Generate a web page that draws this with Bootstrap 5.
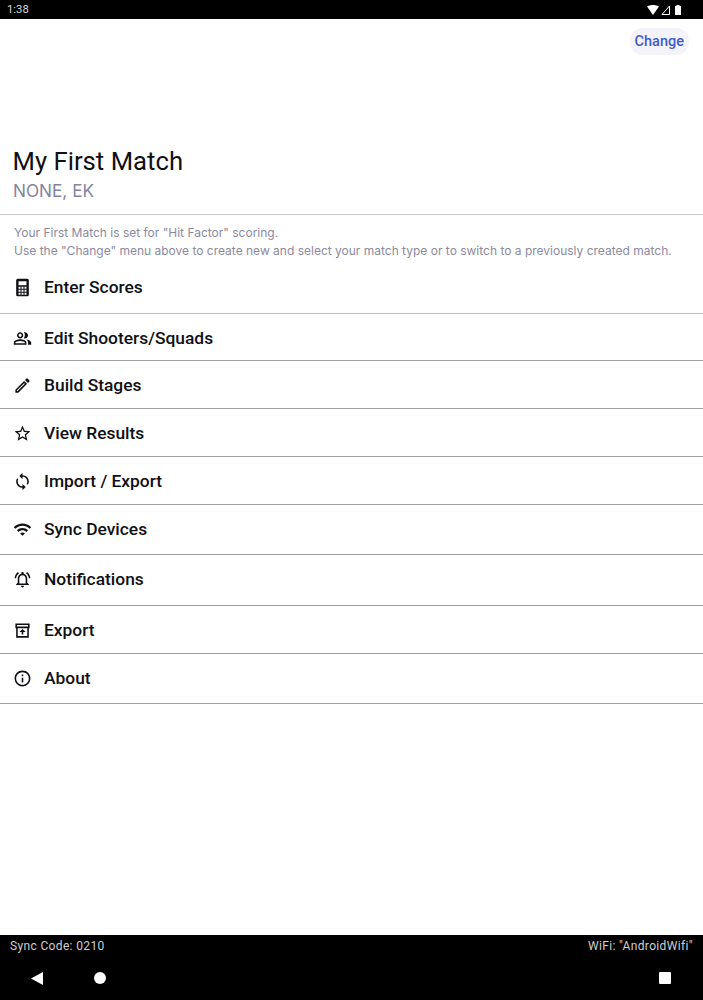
<!DOCTYPE html>
<html lang="en">
<head>
    <meta charset="UTF-8">
    <meta name="viewport" content="width=device-width, initial-scale=1.0">
    <title>My First Match</title>
    <link href="https://cdn.jsdelivr.net/npm/bootstrap@5.3.0/dist/css/bootstrap.min.css" rel="stylesheet">
    <style>
        html, body {
            height: 1000px;
            overflow: hidden;
        }
        body {
            font-family: Roboto, "Liberation Sans", sans-serif;
            background-color: #fff;
            color: #101014;
        }
        .app-page {
            height: 1000px;
        }
        .status-bar {
            height: 19px;
            padding: 0 22px 0 7px;
            background-color: #000;
            color: #d8d8d8;
            font-size: 11.300px;
            line-height: 19px;
        }
        .status-icons {
            gap: 2px;
        }
        .status-battery {
            margin-left: 3px;
        }
        .top-action {
            height: 195px;
            padding: 9px 14px 0 0;
        }
        .btn-change {
            height: 27px;
            padding: 0 5px;
            border: 0;
            border-radius: 13px;
            background-color: #f3f3f9;
            color: #3f5cc8;
            font-size: 14.500px;
            font-weight: 500;
            line-height: 27px;
        }
        .match-head {
            height: 0;
        }
        .match-title {
            margin: 0;
            padding: 126px 0 0 12.500px;
            font-size: 25.700px;
            font-weight: 400;
            line-height: 32px;
        }
        .match-sub {
            padding-left: 13px;
            color: #85849f;
            font-family: Inter, sans-serif;
            font-size: 17.200px;
            line-height: 28px;
        }
        .match-info {
            height: 58px;
            padding: 9px 14px 0;
            border-top: 1px solid #c9c9c9;
            color: #8b8a9e;
            font-family: Inter, sans-serif;
            font-size: 12px;
            line-height: 18px;
            white-space: nowrap;
        }
        .menu-item {
            padding: 0 0 0 12.500px;
            border-color: #a0a0a0;
            color: #101014;
            font-size: 17.400px;
            font-weight: 500;
        }
        .list-group-flush > .menu-item:last-child {
            border-bottom-width: 1px;
        }
        .menu-item svg {
            flex: none;
            width: 19px;
            height: 19px;
            margin-right: 12.500px;
            fill: currentColor;
        }
        .row-h41 { height: 42px; padding-bottom: 11px; border-bottom-color: #bcbcbc; }
        .row-h47 { height: 47px; padding-top: 3px; }
        .row-h48 { height: 48px; padding-top: 2px; }
        .row-h50 { height: 50px; }
        .row-h51 { height: 51px; padding-bottom: 1px; }
        .bottom-bar {
            background-color: #000;
            color: #cfcfcf;
        }
        .sync-line {
            height: 20px;
            padding: 1px 10px 0;
            font-size: 12px;
            letter-spacing: .35px;
            line-height: 20px;
        }
        .nav-line {
            height: 45px;
        }
        .nav-line svg {
            position: absolute;
            top: 17px;
            fill: #fff;
        }
        .nav-back { left: 31px; }
        .nav-home { left: 94px; }
        .nav-recent { left: 659px; }
    </style>
</head>
<body>

<div class="app-page d-flex flex-column">
    <!-- Status bar -->
    <div class="status-bar d-flex justify-content-between align-items-center">
        <span>1:38</span>
        <span class="status-icons d-flex align-items-center">
            <svg width="12" height="10" viewBox="0 0 12 10"><path fill="#fff" d="M0 1.500C3.500-.5 8.500-.5 12 1.500L6 10z"/></svg>
            <svg width="9" height="10" viewBox="0 0 9 10"><path fill="none" stroke="#fff" d="M8.500 1v8.500H1z"/></svg>
            <svg class="status-battery" width="6" height="10" viewBox="0 0 6 10"><path fill="#fff" d="M1.500 0h3v1H6v9H0V1h1.500z"/></svg>
        </span>
    </div>

    <div class="flex-grow-1">
        <div class="match-head">
            <h1 class="match-title">My First Match</h1>
            <div class="match-sub">NONE, EK</div>
        </div>
        <div class="top-action d-flex justify-content-end align-items-start">
            <button class="btn btn-change" type="button">Change</button>
        </div>

        <div class="match-info">
            <div>Your First Match is set for "Hit Factor" scoring.</div>
            <div>Use the "Change" menu above to create new and select your match type or to switch to a previously created match.</div>
        </div>

        <!-- Main menu -->
        <div class="list-group list-group-flush">
            <a href="#" class="list-group-item menu-item row-h41 d-flex align-items-center">
                <svg viewBox="0 0 24 24"><path fill-rule="evenodd" d="M6 1h12a2 2 0 0 1 2 2v18a2 2 0 0 1-2 2H6a2 2 0 0 1-2-2V3a2 2 0 0 1 2-2zm1 3v5h10V4H7zm0 7v2.500h2.500V11H7zm3.750 0v2.500h2.500V11h-2.500zM14.500 11v2.500H17V11h-2.500zM7 14.750v2.500h2.500v-2.500H7zm3.750 0v2.500h2.500v-2.500h-2.500zm3.750 0v2.500H17v-2.500h-2.500zM7 18.500V21h2.500v-2.500H7zm3.750 0V21h2.500v-2.500h-2.500zm3.750 0V21H17v-2.500h-2.500z"/></svg>
                Enter Scores
            </a>
            <a href="#" class="list-group-item menu-item row-h47 d-flex align-items-center">
                <svg viewBox="0 0 24 24"><path d="M16.670 13.130C18.040 14.060 19 15.320 19 17v3h4v-3c0-2.180-3.570-3.470-6.330-3.870zM15 12c2.210 0 4-1.790 4-4s-1.790-4-4-4c-.47 0-.91.1-1.330.24C14.500 5.270 15 6.580 15 8s-.5 2.730-1.330 3.760c.42.14.86.24 1.330.24zM9 12c2.210 0 4-1.790 4-4s-1.790-4-4-4-4 1.790-4 4 1.790 4 4 4zm0-6c1.100 0 2 .9 2 2s-.9 2-2 2-2-.9-2-2 .9-2 2-2zM9 13c-2.670 0-8 1.340-8 4v3h16v-3c0-2.660-5.330-4-8-4zm6 5H3v-.99C3.200 16.290 6.300 15 9 15s5.800 1.290 6 2z"/></svg>
                Edit Shooters/Squads
            </a>
            <a href="#" class="list-group-item menu-item row-h48 d-flex align-items-center">
                <svg viewBox="0 0 24 24"><path d="M14.060 9.020l.92.92L5.920 19H5v-.92l9.060-9.060M17.660 3c-.25 0-.51.1-.7.29l-1.830 1.830 3.750 3.750 1.830-1.830c.39-.39.39-1.020 0-1.410l-2.340-2.340c-.2-.2-.45-.29-.71-.29zm-3.600 3.190L3 17.250V21h3.750L17.810 9.940l-3.750-3.750z"/></svg>
                Build Stages
            </a>
            <a href="#" class="list-group-item menu-item row-h48 d-flex align-items-center">
                <svg viewBox="0 0 24 24"><path d="M22 9.240l-7.190-.62L12 2 9.190 8.630 2 9.240l5.460 4.730L5.820 21 12 17.270 18.180 21l-1.630-7.030L22 9.240zM12 15.400l-3.760 2.270 1-4.280-3.320-2.880 4.380-.38L12 6.100l1.710 4.040 4.380.38-3.320 2.880 1 4.280L12 15.400z"/></svg>
                View Results
            </a>
            <a href="#" class="list-group-item menu-item row-h48 d-flex align-items-center">
                <svg viewBox="0 0 24 24"><path d="M12 4V1L8 5l4 4V6c3.310 0 6 2.690 6 6 0 1.010-.25 1.970-.7 2.800l1.460 1.460C19.540 15.030 20 13.570 20 12c0-4.420-3.580-8-8-8zm0 14c-3.310 0-6-2.690-6-6 0-1.010.25-1.970.7-2.800L5.240 7.740C4.460 8.970 4 10.430 4 12c0 4.420 3.580 8 8 8v3l4-4-4-4v3z"/></svg>
                Import / Export
            </a>
            <a href="#" class="list-group-item menu-item row-h50 d-flex align-items-center">
                <svg viewBox="0 0 24 24"><path d="M1 9l2 2c4.970-4.970 13.030-4.970 18 0l2-2C16.930 2.930 7.080 2.930 1 9zm8 8l3 3 3-3c-1.650-1.660-4.340-1.660-6 0zm-4-4l2 2c2.760-2.760 7.240-2.760 10 0l2-2C15.140 9.140 8.870 9.140 5 13z"/></svg>
                Sync Devices
            </a>
            <a href="#" class="list-group-item menu-item row-h51 d-flex align-items-center">
                <svg viewBox="0 0 24 24"><path d="M7.580 4.080L6.150 2.650C3.750 4.480 2.170 7.300 2.030 10.500h2c.15-2.650 1.510-4.970 3.550-6.420zm12.390 6.420h2c-.15-3.200-1.730-6.020-4.120-7.850l-1.420 1.430c2.020 1.450 3.390 3.770 3.540 6.420zM18 11c0-3.070-1.640-5.640-4.500-6.320V4c0-.83-.67-1.500-1.500-1.500s-1.500.67-1.500 1.500v.68C7.630 5.360 6 7.920 6 11v5l-2 2v1h16v-1l-2-2v-5zm-2 6H8v-6c0-2.480 1.510-4.500 4-4.500s4 2.020 4 4.500v6zm-4 5c1.100 0 2-.9 2-2h-4c.01 1.100.9 2 2 2z"/></svg>
                Notifications
            </a>
            <a href="#" class="list-group-item menu-item row-h48 d-flex align-items-center">
                <svg viewBox="0 0 24 24"><path fill-rule="evenodd" d="M3 3h18v6h-1v12H4V9H3V3zm2 2v2h14V5H5zm1 4v10h12V9H6zm6 1l4 4h-3v3h-2v-3H8l4-4z"/></svg>
                Export
            </a>
            <a href="#" class="list-group-item menu-item row-h50 d-flex align-items-center">
                <svg viewBox="0 0 24 24"><path d="M11 7h2v2h-2zm0 4h2v6h-2zm1-9C6.480 2 2 6.480 2 12s4.480 10 10 10 10-4.480 10-10S17.520 2 12 2zm0 18c-4.410 0-8-3.590-8-8s3.590-8 8-8 8 3.590 8 8-3.590 8-8 8z"/></svg>
                About
            </a>
        </div>
    </div>

    <!-- Footer and Android nav -->
    <div class="bottom-bar">
        <div class="sync-line d-flex justify-content-between">
            <span>Sync Code: 0210</span>
            <span>WiFi: "AndroidWifi"</span>
        </div>
        <div class="nav-line position-relative">
            <svg class="nav-back" width="12" height="13" viewBox="0 0 12 13"><path d="M12 0v13L0 6.500z"/></svg>
            <svg class="nav-home" width="12" height="12" viewBox="0 0 12 12"><circle cx="6" cy="6" r="6"/></svg>
            <svg class="nav-recent" width="12" height="12" viewBox="0 0 12 12"><rect width="12" height="12" rx="1"/></svg>
        </div>
    </div>
</div>

<script src="https://cdn.jsdelivr.net/npm/bootstrap@5.3.0/dist/js/bootstrap.bundle.min.js"></script>
</body>
</html>
